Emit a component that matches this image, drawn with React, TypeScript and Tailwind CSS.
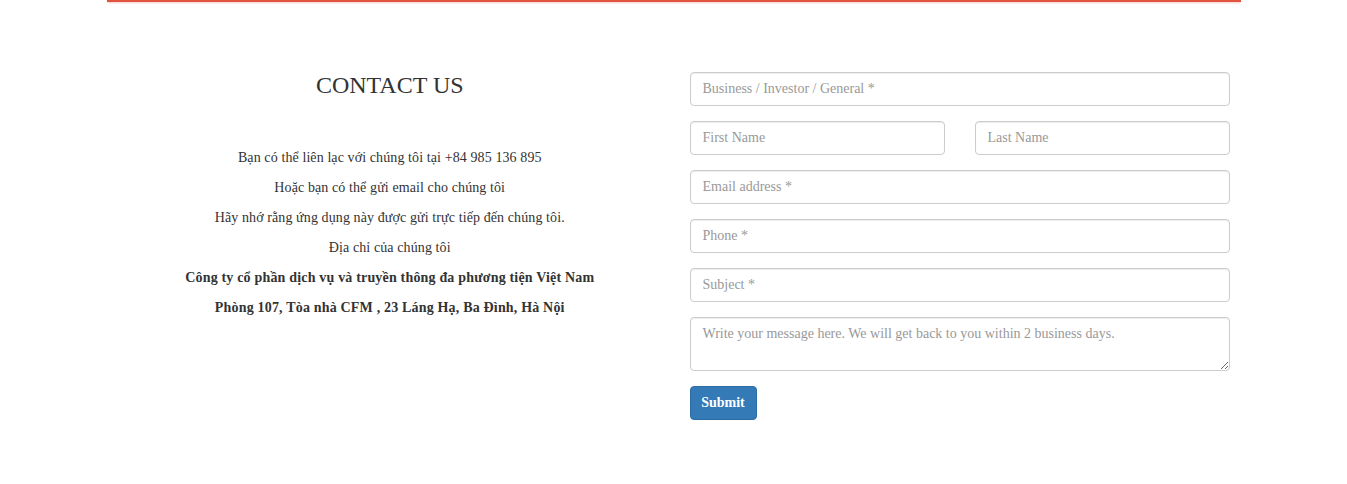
const inputCls =
  "block w-full h-[34px] px-3 py-[6px] text-[14px] text-[#555] bg-white border border-[#ccc] rounded-[4px] shadow-[inset_0_1px_1px_rgba(0,0,0,0.075)] placeholder:text-[#999] outline-none";

const lines = [
  "Bạn có thể liên lạc với chúng tôi tại +84 985 136 895",
  "Hoặc bạn có thể gửi email cho chúng tôi",
  "Hãy nhớ rằng ứng dụng này được gửi trực tiếp đến chúng tôi.",
  "Địa chỉ của chúng tôi",
];

export default function App() {
  return (
    <div className="min-h-[484px] bg-white text-[#333] text-[14px] leading-[20px] font-['Liberation_Serif','Times_New_Roman',serif]">
      <div className="w-[1135px] mx-auto pl-px">
        <div className="h-[2px] bg-[#e0533f] shadow-[0_1px_2px_rgba(224,83,63,0.3)]" />
      </div>

      <div className="w-[1135px] mx-auto flex pt-[70px]">
        <div className="w-1/2 px-[15px] text-center">
          <h3 className="text-[24px] leading-[26px] font-normal mt-0 mb-[50px]">CONTACT US</h3>
          {lines.map((l) => (
            <p key={l} className="mb-[10px] tracking-[0.1px]">
              {l}
            </p>
          ))}
          <p className="mb-[10px] font-bold tracking-[0.18px]">
            Công ty cổ phần dịch vụ và truyền thông đa phương tiện Việt Nam
          </p>
          <p className="mb-[10px] font-bold tracking-[0.18px]">
            Phòng 107, Tòa nhà CFM , 23 Láng Hạ, Ba Đình, Hà Nội
          </p>
        </div>

        <form className="w-[540px] ml-[16px]" onSubmit={(e) => e.preventDefault()}>
          <div className="mb-[15px]">
            <input className={inputCls} placeholder="Business / Investor / General *" />
          </div>
          <div className="mb-[15px] flex gap-[30px]">
            <input className={inputCls} placeholder="First Name" />
            <input className={inputCls} placeholder="Last Name" />
          </div>
          <div className="mb-[15px]">
            <input className={inputCls} placeholder="Email address *" />
          </div>
          <div className="mb-[15px]">
            <input className={inputCls} placeholder="Phone *" />
          </div>
          <div className="mb-[15px]">
            <input className={inputCls} placeholder="Subject *" />
          </div>
          <div className="mb-[15px]">
            <textarea
              rows={2}
              className="block w-full h-[54px] px-3 py-[6px] text-[14px] leading-[20px] text-[#555] bg-white border border-[#ccc] rounded-[4px] shadow-[inset_0_1px_1px_rgba(0,0,0,0.075)] placeholder:text-[#999] outline-none"
              placeholder="Write your message here. We will get back to you within 2 business days."
            />
          </div>
          <button
            type="submit"
            className="h-[34px] w-[67px] text-white font-bold bg-[#337ab7] border border-[#2e6da4] rounded-[4px]"
          >
            Submit
          </button>
        </form>
      </div>
    </div>
  );
}
